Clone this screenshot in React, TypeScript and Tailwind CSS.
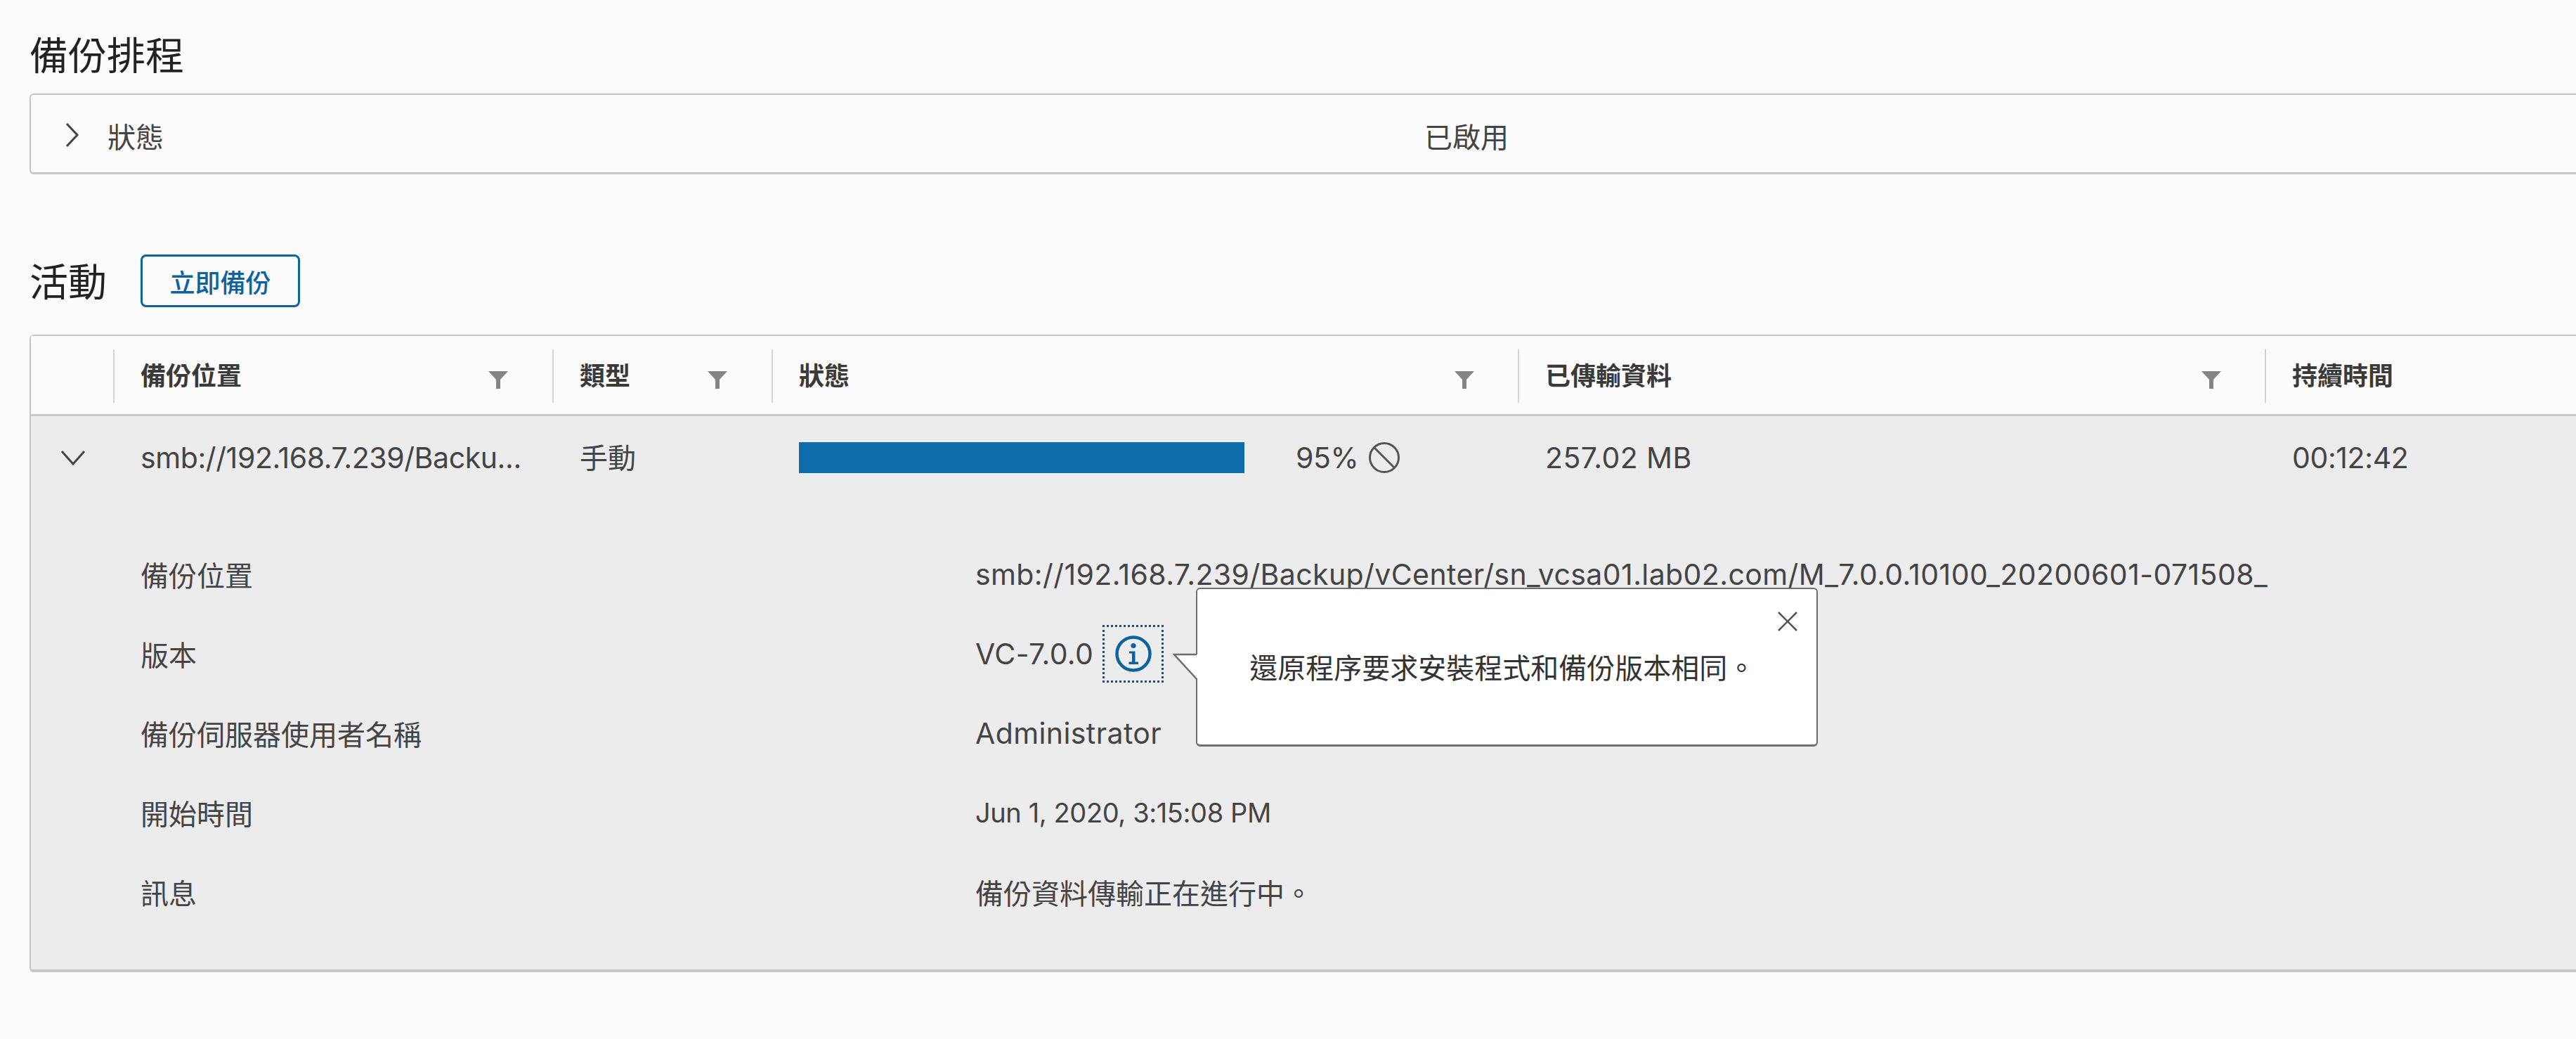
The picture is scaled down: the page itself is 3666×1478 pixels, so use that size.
import React from "react";

const columns = [
  { label: "備份位置", width: "w-[625px]", filterAt: "pr-[63px]" },
  { label: "類型", width: "w-[312px]", filterAt: "pr-[63px]" },
  { label: "狀態", width: "w-[1062px]", filterAt: "pr-[62px]" },
  { label: "已傳輸資料", width: "w-[1063px]", filterAt: "pr-[62px]" },
];

// Latin values use a wider face than the CJK text around them
const latin = "font-['Inter','Noto_Sans_CJK_TC',sans-serif] text-[41px] tracking-[0.4px]";
const latinTight = "font-['Inter','Noto_Sans_CJK_TC',sans-serif] text-[41px] tracking-[-0.4px]";
const latinDate = "font-['Inter','Noto_Sans_CJK_TC',sans-serif] text-[38px] tracking-[-0.4px]";

function FilterIcon() {
  return (
    <svg viewBox="0 0 28 26" className="w-[28px] h-[26px] shrink-0 mt-[30px]">
      <path d="M0 1h28L17 13v13h-6V13z" fill="#858585" />
    </svg>
  );
}

function InfoIcon() {
  return (
    <svg viewBox="0 0 52 52" className="w-[52px] h-[52px]">
      <circle cx="26" cy="26" r="23.5" fill="none" stroke="#0f62a0" strokeWidth="4.5" />
      <circle cx="26" cy="14.5" r="3.6" fill="#0f62a0" />
      <path d="M20 22.5h8.5v15H33v3.5H19.5v-3.5h4.5v-12h-4z" fill="#0f62a0" />
    </svg>
  );
}

function BanIcon() {
  return (
    <svg viewBox="0 0 46 46" className="w-[46px] h-[46px] ml-[14px]">
      <circle cx="23" cy="23" r="20.5" fill="none" stroke="#555555" strokeWidth="3" />
      <path d="M8.5 8.5l29 29" stroke="#555555" strokeWidth="3" />
    </svg>
  );
}

const details = [
  { label: "備份位置", value: "smb://192.168.7.239/Backup/vCenter/sn_vcsa01.lab02.com/M_7.0.0.10100_20200601-071508_", font: latin },
  { label: "版本", value: "VC-7.0.0", popover: true, font: latin },
  { label: "備份伺服器使用者名稱", value: "Administrator", font: latin },
  { label: "開始時間", value: "Jun 1, 2020, 3:15:08 PM", font: latinDate },
  { label: "訊息", value: "備份資料傳輸正在進行中。", font: "" },
];

function Popover() {
  return (
    <div className="absolute left-[133px] top-[-53px] w-[885px] h-[226px] bg-white border-2 border-b-[3px] border-[#6e6e6e] rounded-[6px] flex items-center pl-[74px] text-[#333333]">
      <svg viewBox="0 0 36 38" className="absolute left-[-35px] top-[91px] w-[36px] h-[38px]">
        <path d="M36 2H2l32 34h2z" fill="#ffffff" />
        <path d="M34 2H2l32 35" fill="none" stroke="#6e6e6e" strokeWidth="2.5" />
      </svg>
      還原程序要求安裝程式和備份版本相同。
      <svg viewBox="0 0 28 28" className="absolute right-[27px] top-[32px] w-[28px] h-[28px]">
        <path d="M1 1l26 26M27 1L1 27" stroke="#555555" strokeWidth="2.5" fill="none" />
      </svg>
    </div>
  );
}

export default function App() {
  return (
    <div className="w-[3666px] h-[1478px] overflow-hidden bg-[#fbfbfb] pl-[42px] text-[40px] leading-[56px] text-[#444444] font-['Noto_Sans_CJK_TC',sans-serif]">
      {/* Backup schedule */}
      <h2 className="pt-[43px] h-[133px] text-[55px] leading-[64px] text-[#222222]">備份排程</h2>
      <div className="h-[115px] border-2 border-r-0 border-b-[3px] border-[#c6c6c6] rounded-l-[6px] flex items-center">
        <svg viewBox="0 0 20 36" className="w-[20px] h-[36px] ml-[49px] mt-[4px]">
          <path d="M2 2l15 16L2 34" fill="none" stroke="#444444" strokeWidth="3" />
        </svg>
        <span className="ml-[40px] w-[1874px] pt-[6px]">狀態</span>
        <span className="pt-[6px]">已啟用</span>
      </div>

      {/* Activity */}
      <div className="mt-[114px] h-[75px] flex items-center">
        <h2 className="text-[55px] leading-[64px] text-[#222222] pb-[5px]">活動</h2>
        <button className="ml-[48px] w-[227px] h-[75px] border-[3px] border-[#0f62a0] rounded-[8px] text-[36px] font-medium text-[#0f62a0]">
          立即備份
        </button>
      </div>

      <div className="mt-[39px] h-[907px] border-2 border-r-0 border-b-[4px] border-[#c6c6c6] rounded-l-[6px] bg-[#ececec]">
        {/* Table header */}
        <div className="h-[114px] bg-[#fbfbfb] border-b-[3px] border-[#c9c9c9] flex items-start pt-[19px] text-[36px] font-bold text-[#3a3a3a]">
          <div className="w-[117px] shrink-0" />
          {columns.map((col) => (
            <div key={col.label} className={`${col.width} shrink-0 h-[76px] border-l-2 border-[#d4d4d4] pl-[37px] flex justify-between ${col.filterAt}`}>
              <span className="leading-[70px]">{col.label}</span>
              <FilterIcon />
            </div>
          ))}
          <div className="flex-1 h-[76px] border-l-2 border-[#d4d4d4] pl-[37px] leading-[70px]">持續時間</div>
        </div>

        {/* Expanded row */}
        <div className="h-[126px] pb-[8px] flex items-center">
          <div className="w-[117px] shrink-0 pl-[42px]">
            <svg viewBox="0 0 36 22" className="w-[36px] h-[22px]">
              <path d="M2 2l16 18L34 2" fill="none" stroke="#444444" strokeWidth="3" />
            </svg>
          </div>
          <div className={`w-[625px] shrink-0 pl-[39px] ${latinTight}`}>smb://192.168.7.239/Backu...</div>
          <div className="w-[312px] shrink-0 pl-[39px] pb-[4px]">手動</div>
          <div className="w-[1062px] shrink-0 pl-[39px] flex items-center">
            <div className="w-[634px] h-[44px] bg-[#0f6cab]" />
            <span className={`ml-[73px] ${latinTight}`}>95%</span>
            <BanIcon />
          </div>
          <div className={`w-[1063px] shrink-0 pl-[39px] ${latin}`}>257.02 MB</div>
          <div className={`pl-[39px] ${latinTight}`}>00:12:42</div>
        </div>

        {/* Details */}
        <div className="pt-[42px] pl-[156px]">
          {details.map((row) => (
            <div key={row.label} className="h-[113px] grid grid-cols-[1188px_1fr] items-center">
              <span>{row.label}</span>
              <div className="flex items-center">
                <span className={row.font}>{row.value}</span>
                {row.popover && (
                  <div className="relative ml-[13px]">
                    <div className="w-[87px] h-[82px] border-[3px] border-dotted border-[#0f4f9a] flex items-center justify-center">
                      <InfoIcon />
                    </div>
                    <Popover />
                  </div>
                )}
              </div>
            </div>
          ))}
        </div>
      </div>
    </div>
  );
}
